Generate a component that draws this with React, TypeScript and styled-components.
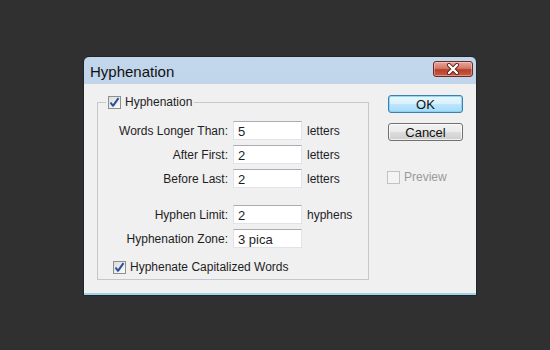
import React from 'react'
import styled, { createGlobalStyle } from 'styled-components'

const GlobalStyle = createGlobalStyle`
    html, body {
        margin: 0;
        padding: 0;
        background: #303030;
    }
    body {
        font-family: 'Liberation Sans', Arial, sans-serif;
        font-size: 12px;
        color: #1e1e1e;
    }
`

const Page = styled.div`
    width: 550px;
    height: 350px;
    box-sizing: border-box;
    padding: 56px 0 0 83px;
    background: #303030;
`

const Window = styled.div`
    width: 394px;
    height: 240px;
    box-sizing: border-box;
    display: flex;
    flex-direction: column;
    border: 1px solid #1f2630;
    border-radius: 6px 6px 0 0;
    background: linear-gradient(#c2d6ec, #b4cae2);
    overflow: hidden;
`

const TitleBar = styled.div`
    height: 27px;
    display: flex;
    align-items: center;
    justify-content: space-between;
    padding: 0 3px 0 6px;
    flex-shrink: 0;
`

const Title = styled.span`
    font-size: 15px;
    color: #111;
    margin-top: 2px;
`

const CloseButton = styled.div`
    width: 40px;
    height: 16px;
    margin-top: -3px;
    box-sizing: border-box;
    border: 1px solid #6b2a22;
    border-radius: 3px;
    background: linear-gradient(#e6a497 0%, #d47a69 45%, #b8402c 55%, #c75c45 100%);
    display: flex;
    align-items: center;
    justify-content: center;
    box-shadow: inset 0 0 0 1px rgba(255, 255, 255, 0.35);
`

const Body = styled.div`
    flex: 1;
    display: flex;
    align-items: flex-start;
    gap: 19px;
    padding: 11px 0 0 13px;
    background: #f0f0f0;
    border-bottom: 2px solid #9fd3e6;
`

const Group = styled.fieldset`
    width: 272px;
    box-sizing: border-box;
    margin: 0;
    padding: 12px 0 5px 2px;
    border: 1px solid #c4c8cc;
    min-width: 0;
`

const Legend = styled.legend`
    margin-left: 6px;
    padding: 0 2px;
`

const CheckLabel = styled.label<{ $disabled?: boolean }>`
    display: flex;
    align-items: center;
    gap: 4px;
    height: 14px;
    color: ${({ $disabled }) => ($disabled ? '#9a9a9a' : '#1e1e1e')};
`

const Box = styled.span<{ $disabled?: boolean }>`
    width: 13px;
    height: 13px;
    box-sizing: border-box;
    border: 1px solid ${({ $disabled }) => ($disabled ? '#c2c2c2' : '#8e8f8f')};
    background: ${({ $disabled }) =>
        $disabled ? '#f4f4f4' : 'linear-gradient(135deg, #dcdcdc, #fbfbfb)'};
    display: flex;
    align-items: center;
    justify-content: center;
`

const Fields = styled.div`
    display: grid;
    grid-template-columns: 128px 69px auto;
    grid-template-rows: 19px 19px 19px 7px 19px 19px;
    column-gap: 5px;
    row-gap: 5px;
    align-items: center;
`

const Spacer = styled.div`
    grid-column: 1 / -1;
`

const Label = styled.span`
    text-align: right;
`

const Input = styled.div`
    height: 19px;
    box-sizing: border-box;
    border: 1px solid #e2e3ea;
    border-top-color: #abadb3;
    background: #fff;
    padding: 2px 4px 0;
    line-height: 15px;
    font-size: 13px;
`

const Unit = styled.span``

const CapsRow = styled.div`
    margin: 12px 0 0 13px;
`

const Side = styled.div`
    display: flex;
    flex-direction: column;
    width: 75px;
`

const Button = styled.div<{ $default?: boolean }>`
    height: 18px;
    box-sizing: border-box;
    border: 1px solid ${({ $default }) => ($default ? '#3c7fb1' : '#707070')};
    border-radius: 3px;
    background: ${({ $default }) =>
        $default
            ? 'linear-gradient(#eaf6fd 0%, #d9f0fc 50%, #bee6fd 51%, #a7d9f5 100%)'
            : 'linear-gradient(#f2f2f2 0%, #ebebeb 50%, #dddddd 51%, #cfcfcf 100%)'};
    box-shadow: inset 0 0 0 1px
        ${({ $default }) => ($default ? 'rgba(120,210,240,0.8)' : 'rgba(255,255,255,0.7)')};
    display: flex;
    align-items: center;
    justify-content: center;
    font-size: 13px;
    color: #111;
    margin-bottom: 10px;
`

const PreviewRow = styled.div`
    margin: 19px 0 0 -1px;
`

const Check = () => (
    <svg width="11" height="11" viewBox="0 0 11 11">
        <path
            d="M1.5 5.5 L4 8.8 L9.5 1.2"
            fill="none"
            stroke="#2b4f99"
            strokeWidth="2"
            strokeLinejoin="round"
        />
    </svg>
)

const CheckBox = ({
    label,
    checked,
    disabled,
}: {
    label: string
    checked?: boolean
    disabled?: boolean
}) => (
    <CheckLabel $disabled={disabled}>
        <Box $disabled={disabled}>{checked && <Check />}</Box>
        {label}
    </CheckLabel>
)

const fields = [
    { label: 'Words Longer Than:', value: '5', unit: 'letters' },
    { label: 'After First:', value: '2', unit: 'letters' },
    { label: 'Before Last:', value: '2', unit: 'letters' },
]

const limits = [
    { label: 'Hyphen Limit:', value: '2', unit: 'hyphens' },
    { label: 'Hyphenation Zone:', value: '3 pica', unit: '' },
]

export default function App() {
    return (
        <>
            <GlobalStyle />
            <Page>
                <Window>
                    <TitleBar>
                        <Title>Hyphenation</Title>
                        <CloseButton>
                            <svg width="14" height="12" viewBox="0 0 14 12">
                                <path
                                    d="M3 2 L11 10 M11 2 L3 10"
                                    stroke="#5a1d14"
                                    strokeWidth="4"
                                    strokeLinecap="round"
                                />
                                <path
                                    d="M3 2 L11 10 M11 2 L3 10"
                                    stroke="#fff"
                                    strokeWidth="2.4"
                                    strokeLinecap="round"
                                />
                            </svg>
                        </CloseButton>
                    </TitleBar>
                    <Body>
                        <Group>
                            <Legend>
                                <CheckBox label="Hyphenation" checked />
                            </Legend>
                            <Fields>
                                {fields.map((f) => (
                                    <React.Fragment key={f.label}>
                                        <Label>{f.label}</Label>
                                        <Input>{f.value}</Input>
                                        <Unit>{f.unit}</Unit>
                                    </React.Fragment>
                                ))}
                                <Spacer />
                                {limits.map((f) => (
                                    <React.Fragment key={f.label}>
                                        <Label>{f.label}</Label>
                                        <Input>{f.value}</Input>
                                        <Unit>{f.unit}</Unit>
                                    </React.Fragment>
                                ))}
                            </Fields>
                            <CapsRow>
                                <CheckBox label="Hyphenate Capitalized Words" checked />
                            </CapsRow>
                        </Group>
                        <Side>
                            <Button $default>OK</Button>
                            <Button>Cancel</Button>
                            <PreviewRow>
                                <CheckBox label="Preview" disabled />
                            </PreviewRow>
                        </Side>
                    </Body>
                </Window>
            </Page>
        </>
    )
}
